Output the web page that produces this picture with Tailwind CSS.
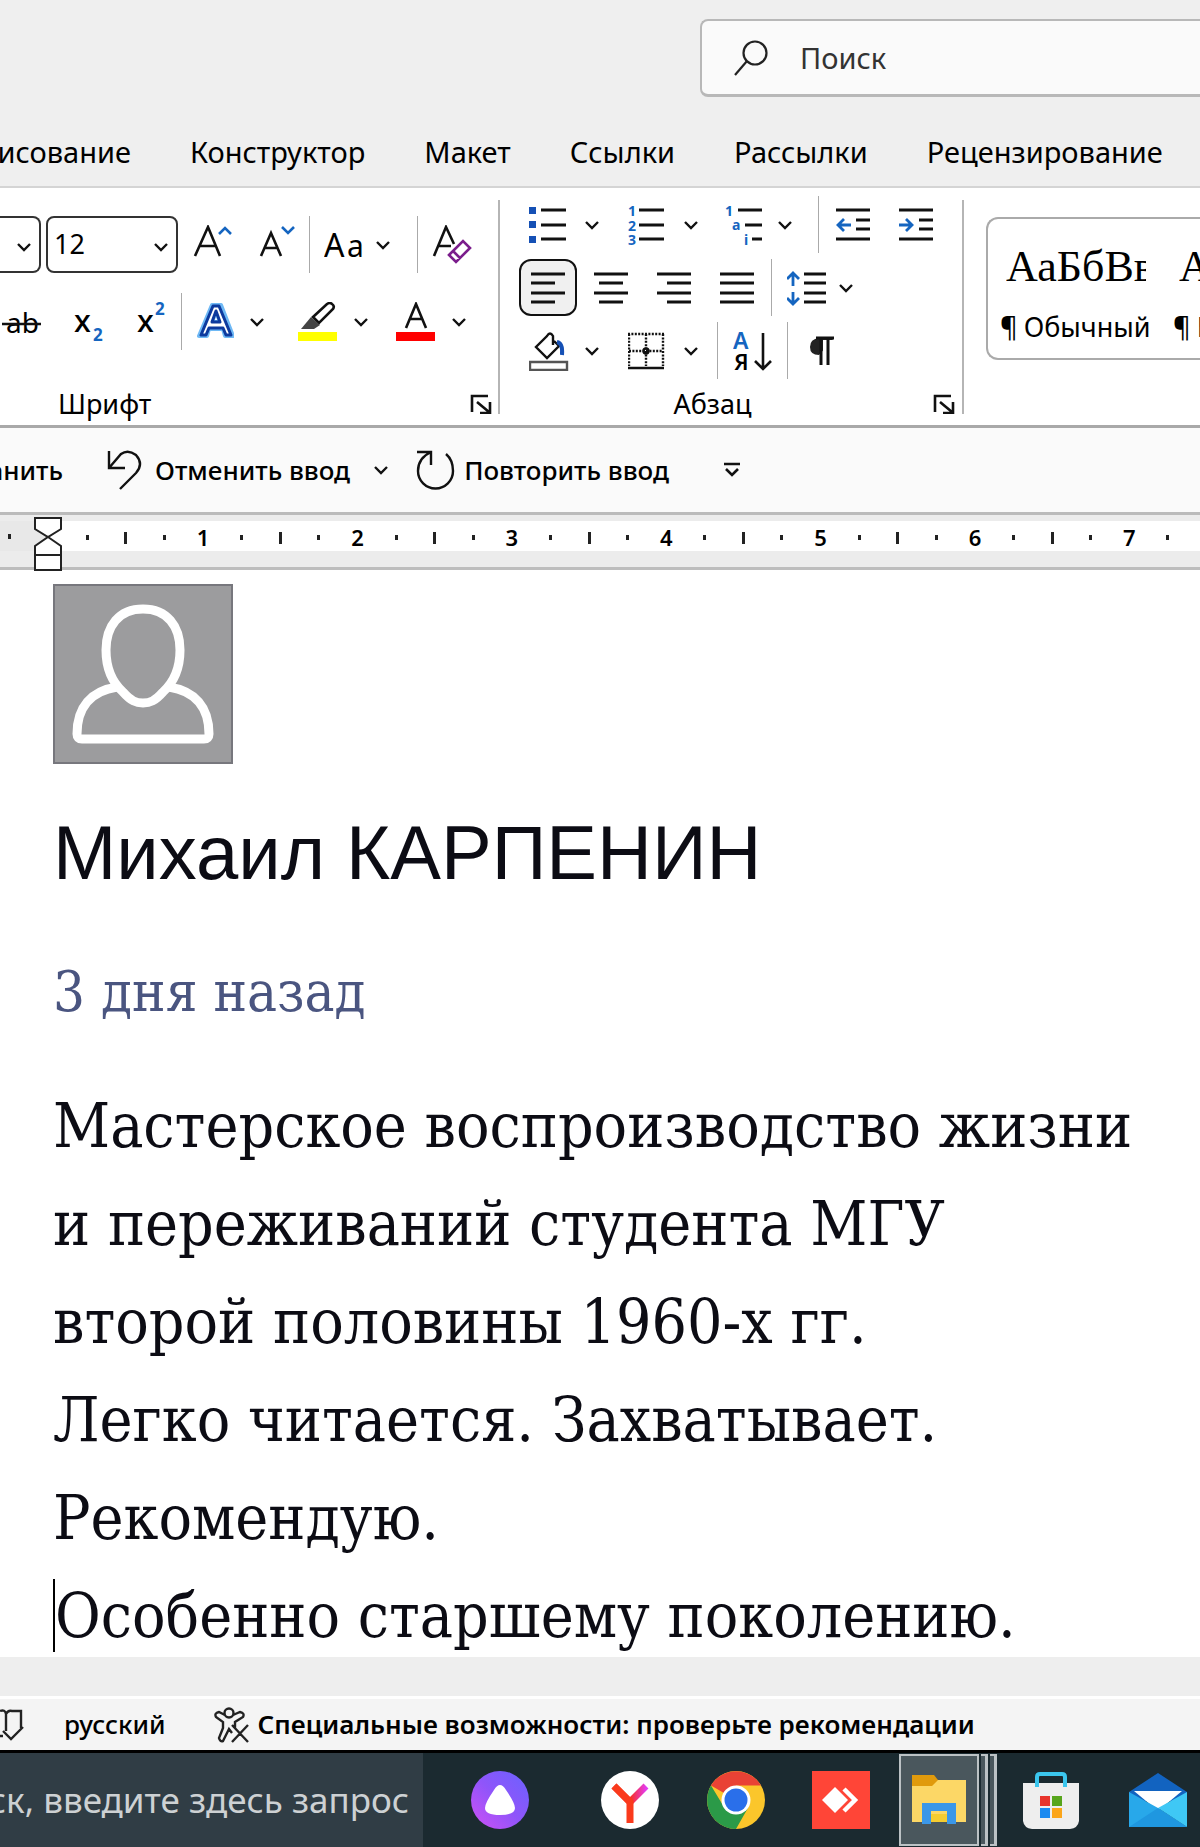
<!DOCTYPE html>
<html lang="ru">
<head>
    <meta charset="UTF-8">
    <meta name="viewport" content="width=device-width, initial-scale=1.0">
    <title>Документ - Word</title>
    <script src="https://cdn.jsdelivr.net/npm/@tailwindcss/browser@4"></script>
</head>
<body class="bg-white text-black font-['Noto_Sans',sans-serif] overflow-x-hidden">
    <!-- Shared shapes -->
    <svg class="hidden">
        <symbol id="chevron" viewBox="0 0 14 10"><path d="M1 2l6 6 6-6" fill="none" stroke="#111" stroke-width="2.4"/></symbol>
        <symbol id="launcher" viewBox="0 0 22 20"><path d="M2 18V2h16M7 8l12 10M20 8v11H10" fill="none" stroke="#111" stroke-width="2.6"/></symbol>
    </svg>

    <!-- Title bar with search and tabs -->
    <header class="bg-[#efefef] border-b-2 border-[#d4d4d4] overflow-hidden">
        <div class="flex justify-end pt-[19px]">
            <label for="search" class="flex items-center w-[500px] h-[78px] pl-8 bg-[#fafafa] rounded-l-lg border-2 border-r-0 border-b-3 border-[#b8b8b8]">
                <svg class="w-[34px] h-9" viewBox="0 0 34 36" fill="none" stroke="#222" stroke-width="2.2"><circle cx="21" cy="13" r="11.5"/><path d="M13 21L1 35"/></svg>
                <input id="search" type="text" placeholder="Поиск" class="ml-8 w-80 text-[29px] outline-none placeholder:text-[#333] placeholder:opacity-100">
            </label>
        </div>
        <nav class="flex h-[89px] items-end gap-[59px] pb-3 text-[29px] leading-[44px] whitespace-nowrap">
            <button class="w-[131px] flex justify-end">Рисование</button>
            <button>Конструктор</button>
            <button>Макет</button>
            <button>Ссылки</button>
            <button>Рассылки</button>
            <button>Рецензирование</button>
        </nav>
    </header>

    <!-- Ribbon -->
    <section class="flex h-[240px] border-b-3 border-[#a9a9a9] overflow-hidden">
        <!-- Font -->
        <div class="flex flex-col w-[500px] shrink-0 pt-7">
            <div class="flex h-[57px]">
                <div class="relative w-[41px] border-2 border-l-0 border-[#333] rounded-r-lg">
                    <select aria-label="Имя шрифта" class="appearance-none size-full outline-none"><option></option></select>
                    <svg class="absolute right-2 top-6 w-[14px] h-[10px] pointer-events-none"><use href="#chevron"/></svg>
                </div>
                <div class="relative w-[132px] ml-[5px] border-2 border-[#333] rounded-lg">
                    <select aria-label="Размер шрифта" class="appearance-none size-full pl-[6px] text-[27px] outline-none"><option>12</option></select>
                    <svg class="absolute right-2 top-6 w-[14px] h-[10px] pointer-events-none"><use href="#chevron"/></svg>
                </div>
                <button aria-label="Увеличить размер" class="w-16 ml-[3px] flex items-center justify-center">
                    <svg class="w-10 h-10" viewBox="0 4 40 40" fill="none" stroke="#111" stroke-width="2.6"><path d="M2 35L15 6l12 29M7 25h16"/><path d="M26 13l6-6 6 6" stroke="#1565c0"/></svg>
                </button>
                <button aria-label="Уменьшить размер" class="w-16 flex items-center justify-center">
                    <svg class="w-10 h-10" viewBox="0 4 40 40" fill="none" stroke="#111" stroke-width="2.6"><path d="M4 35l10-23 10 23M8 27h12"/><path d="M25 6l6 6 6-6" stroke="#1565c0"/></svg>
                </button>
                <div class="w-px bg-[#aaa]"></div>
                <button aria-label="Регистр" class="w-[107px] pl-[14px] flex items-center gap-3">
                    <svg class="w-10 h-10" viewBox="0 3 40 40"><text x="0" y="35" font-size="32">A</text><text x="23" y="35" font-size="30">a</text></svg>
                    <svg class="w-[14px] h-[10px]"><use href="#chevron"/></svg>
                </button>
                <div class="w-px bg-[#aaa]"></div>
                <button aria-label="Очистить формат" class="w-[68px] flex items-center justify-center">
                    <svg class="w-10 h-10" viewBox="0 1 40 40" fill="none" stroke="#111" stroke-width="2.6"><path d="M2 32L14 3l8 17M7 22h12"/><path d="M17 31l14-14 7 7-14 14zM21 27l7 7" stroke="#7b1d8c" fill="#fff"/></svg>
                </button>
            </div>
            <div class="flex h-[57px] mt-[20px]">
                <button aria-label="Зачеркнутый" class="w-[58px]">
                    <svg class="w-[58px] h-10" viewBox="0 0 58 40"><text x="6" y="31" font-size="28">ab</text><path d="M2 22h39" stroke="#111" stroke-width="2.4"/></svg>
                </button>
                <button aria-label="Подстрочный" class="w-[62px]">
                    <svg class="w-[62px] h-12" viewBox="0 0 62 48"><text x="16" y="34" font-size="31" font-weight="500">x</text><text x="35" y="43" font-size="17" font-weight="bold" fill="#1565c0">2</text></svg>
                </button>
                <button aria-label="Надстрочный" class="w-[61px]">
                    <svg class="w-[61px] h-12" viewBox="0 0 61 48"><text x="17" y="34" font-size="31" font-weight="500">x</text><text x="35" y="17" font-size="17" font-weight="bold" fill="#1565c0">2</text></svg>
                </button>
                <div class="w-px bg-[#aaa]"></div>
                <button aria-label="Текстовые эффекты" class="ml-3 flex items-center gap-4">
                    <svg class="w-10 h-10" viewBox="0 1 40 40" stroke-linejoin="round"><path d="M5 35h8l2-7h14l2 7h8L27 4H18zM18 21l4-11 4 11z" fill="#6fb9f5" stroke="#6fb9f5" stroke-width="4" fill-rule="evenodd"/><path d="M7 34h5l3-7h14l3 7h5L25 5h-6zM18 21l4-11 4 11z" fill="#fff" stroke="#0d3a9e" stroke-width="3" fill-rule="evenodd"/></svg>
                    <svg class="w-[14px] h-[10px]"><use href="#chevron"/></svg>
                </button>
                <button aria-label="Цвет выделения" class="ml-[34px] flex items-center gap-4">
                    <svg class="w-10 h-10" viewBox="0 0 40 40"><path d="M0 30h39v9H0z" fill="#ff0"/><path d="M15 15L29 2q3-2 5 0 3 2 1 5L21 21z" fill="#fff" stroke="#111" stroke-width="2.6"/><path d="M13 15l9 8-6 4H3z" fill="#444"/></svg>
                    <svg class="w-[14px] h-[10px]"><use href="#chevron"/></svg>
                </button>
                <button aria-label="Цвет текста" class="ml-7 flex items-center gap-4">
                    <svg class="w-10 h-10" viewBox="0 0 40 40"><path d="M0 30h39v9H0z" fill="red"/><path d="M10 26L20 2l10 24M14 17h12" fill="none" stroke="#111" stroke-width="2.6"/></svg>
                    <svg class="w-[14px] h-[10px]"><use href="#chevron"/></svg>
                </button>
            </div>
            <div class="flex items-center justify-between mt-9 pl-[58px] pr-2 text-[27px] leading-9">
                <span>Шрифт</span>
                <button aria-label="Параметры шрифта"><svg class="w-[22px] h-5"><use href="#launcher"/></svg></button>
            </div>
        </div>
        <div class="w-[2px] h-[214px] mt-3 -ml-[2px] bg-[#b5b5b5] shrink-0"></div>

        <!-- Paragraph -->
        <div class="flex flex-col w-[463px] shrink-0 pt-2">
            <div class="flex h-[57px] pl-[29px]">
                <button aria-label="Маркеры" class="flex items-center gap-4">
                    <svg class="w-10 h-10" viewBox="0 0 40 40"><path d="M0 2h7v7H0zM0 16h7v7H0zM0 31h7v7H0z" fill="#1550b5"/><path d="M12 5h25M12 20h25M12 34h25" stroke="#111" stroke-width="2.8"/></svg>
                    <svg class="w-[14px] h-[10px]"><use href="#chevron"/></svg>
                </button>
                <button aria-label="Нумерация" class="ml-[29px] flex items-center gap-4">
                    <svg class="w-10 h-10" viewBox="0 0 40 40"><g fill="#1565c0" font-size="14" font-weight="bold"><text x="0" y="11">1</text><text x="0" y="26">2</text><text x="0" y="40">3</text></g><path d="M11 5h25M11 20h25M11 34h25" stroke="#111" stroke-width="2.8"/></svg>
                    <svg class="w-[14px] h-[10px]"><use href="#chevron"/></svg>
                </button>
                <button aria-label="Многоуровневый список" class="ml-6 flex items-center gap-4">
                    <svg class="w-10 h-10" viewBox="0 0 40 40"><g fill="#1565c0" font-size="14" font-weight="bold"><text x="3" y="11">1</text><text x="10" y="25">a</text><text x="22" y="40">i</text></g><path d="M16 5h24M23 20h17M30 34h10" stroke="#111" stroke-width="2.8"/></svg>
                    <svg class="w-[14px] h-[10px]"><use href="#chevron"/></svg>
                </button>
                <div class="ml-[26px] w-px bg-[#aaa]"></div>
                <button aria-label="Уменьшить отступ" class="ml-[15px]">
                    <svg class="w-10 h-10" viewBox="0 0 40 40" fill="none" stroke="#111" stroke-width="2.8"><path d="M2 5h34M22 15h14M22 24h14M2 34h34"/><path d="M17 20H4m6-6l-6 6 6 6" stroke="#1565c0"/></svg>
                </button>
                <button aria-label="Увеличить отступ" class="ml-[23px]">
                    <svg class="w-10 h-10" viewBox="0 0 40 40" fill="none" stroke="#111" stroke-width="2.8"><path d="M2 5h34M22 15h14M22 24h14M2 34h34"/><path d="M2 20h13m-6-6l6 6-6 6" stroke="#1565c0"/></svg>
                </button>
            </div>
            <div class="flex h-[57px] mt-[6px] pl-[19px] gap-[5px]">
                <button aria-label="По левому краю" class="w-[58px] flex items-center justify-center bg-[#f0f0f0] border-2 border-[#111] rounded-xl">
                    <svg class="w-[34px] h-8" viewBox="0 0 34 32" stroke="#111" stroke-width="2.8"><path d="M0 2h34M0 11h24M0 21h34M0 30h24"/></svg>
                </button>
                <button aria-label="По центру" class="w-[58px] flex items-center justify-center">
                    <svg class="w-[34px] h-8" viewBox="0 0 34 32" stroke="#111" stroke-width="2.8"><path d="M0 2h34M5 11h24M0 21h34M5 30h24"/></svg>
                </button>
                <button aria-label="По правому краю" class="w-[58px] flex items-center justify-center">
                    <svg class="w-[34px] h-8" viewBox="0 0 34 32" stroke="#111" stroke-width="2.8"><path d="M0 2h34M10 11h24M0 21h34M10 30h24"/></svg>
                </button>
                <button aria-label="По ширине" class="w-[58px] flex items-center justify-center">
                    <svg class="w-[34px] h-8" viewBox="0 0 34 32" stroke="#111" stroke-width="2.8"><path d="M0 2h34M0 11h34M0 21h34M0 30h34"/></svg>
                </button>
                <div class="w-px bg-[#aaa]"></div>
                <button aria-label="Интервал" class="ml-[10px] flex items-center gap-3">
                    <svg class="w-10 h-10" viewBox="0 0 40 40" fill="none" stroke="#111" stroke-width="2.8"><path d="M17 6h22M17 15h22M17 25h22M17 34h22"/><path d="M6 18V5M0 11l6-6 6 6M6 24v12M0 30l6 6 6-6" stroke="#1565c0"/></svg>
                    <svg class="w-[14px] h-[10px]"><use href="#chevron"/></svg>
                </button>
            </div>
            <div class="flex h-[57px] mt-[6px] pl-[29px]">
                <button aria-label="Заливка" class="flex items-center gap-4">
                    <svg class="w-10 h-10" viewBox="0 0 40 40" fill="none" stroke="#111" stroke-width="2.4"><path d="M1 31h37v8H1z" stroke="#555"/><path d="M24 14V5q-3-5-6 0L7 16l11 11 12-12-5-5"/><path d="M28 11q6 1 5 13" stroke="#1550b5" stroke-width="4"/></svg>
                    <svg class="w-[14px] h-[10px]"><use href="#chevron"/></svg>
                </button>
                <button aria-label="Границы" class="ml-[29px] flex items-center gap-4">
                    <svg class="w-10 h-10" viewBox="0 0 40 40" fill="none" stroke="#111" stroke-width="2.4"><path d="M0 3h36M1 3v32M35 3v32M18 3v32M1 20h34" stroke-dasharray="2 1.4"/><circle cx="18" cy="20" r="2.5"/><path d="M0 37h36"/></svg>
                    <svg class="w-[14px] h-[10px]"><use href="#chevron"/></svg>
                </button>
                <div class="ml-[19px] w-px bg-[#aaa]"></div>
                <button aria-label="Сортировка" class="ml-[15px]">
                    <svg class="w-10 h-10" viewBox="0 0 40 40"><text x="0" y="18" font-size="23" font-weight="600" fill="#1565c0">А</text><text x="1" y="39" font-size="22" font-weight="600">Я</text><path d="M30 2v36M22 30l8 8 8-8" fill="none" stroke="#111" stroke-width="2.6"/></svg>
                </button>
                <div class="ml-[14px] w-px bg-[#aaa]"></div>
                <button aria-label="Непечатаемые знаки" class="ml-[14px]">
                    <svg class="w-10 h-10" viewBox="0 0 40 40"><path d="M32 7H17q-9 1-9 9t9 8z" fill="#222"/><path d="M21 9h4v25h-4zM27 9h6v25h-6z" fill="#fff"/><path d="M14 7h18M19 7v27M26 7v27" fill="none" stroke="#111" stroke-width="3"/></svg>
                </button>
            </div>
            <div class="flex items-center mt-[7px] pr-2 text-[27px] leading-9">
                <span class="flex-1 pr-2 text-center">Абзац</span>
                <button aria-label="Параметры абзаца"><svg class="w-[22px] h-5"><use href="#launcher"/></svg></button>
            </div>
        </div>
        <div class="w-[2px] h-[214px] mt-3 -ml-[1px] bg-[#b5b5b5] shrink-0"></div>

        <!-- Styles -->
        <div class="flex flex-1 h-[143px] mt-[29px] ml-[22px] pl-3 border-2 border-r-0 border-[#aaa] rounded-l-xl overflow-hidden">
            <button class="w-[173px] shrink-0 pt-4 text-left">
                <span class="block w-[140px] ml-[6px] overflow-hidden font-['Liberation_Serif',serif] text-[44px] leading-[60px]">АаБбВв</span>
                <span class="flex gap-[6px] text-[27px] leading-[60px] whitespace-nowrap"><span>¶</span><span>Обычный</span></span>
            </button>
            <button class="w-[173px] shrink-0 pt-4 text-left">
                <span class="block w-[140px] ml-[6px] overflow-hidden font-['Liberation_Serif',serif] text-[44px] leading-[60px]">АаБбВв</span>
                <span class="flex gap-[6px] text-[27px] leading-[60px] whitespace-nowrap"><span>¶</span><span>Без инт</span></span>
            </button>
        </div>
    </section>

    <!-- Quick access bar -->
    <div class="flex items-center h-[87px] bg-[#fafafa] border-b-3 border-[#bbb] text-[26px] font-medium whitespace-nowrap overflow-hidden">
        <button class="w-[63px] flex justify-end">Сохранить</button>
        <button class="ml-11 flex items-center gap-3">
            <svg class="w-9 h-10" viewBox="0 0 36 40" fill="none" stroke="#111" stroke-width="2.4"><path d="M2 1v17h16M2 18L14 4q7-5 15 1 8 9 0 18L13 39"/></svg>
            Отменить ввод
        </button>
        <button aria-label="Список отмены" class="ml-6"><svg class="w-[14px] h-[10px]"><use href="#chevron"/></svg></button>
        <button class="ml-7 flex items-center gap-2">
            <svg class="w-10 h-10" viewBox="0 0 40 40" fill="none" stroke="#111" stroke-width="2.4"><path d="M1 2h14v13M15 2Q2 8 2 21a17.500 17.500 0 0 0 35 0Q37 10 30 4"/></svg>
            Повторить ввод
        </button>
        <button aria-label="Настройка панели" class="ml-[55px]"><svg class="w-4 h-4" viewBox="0 0 16 16" fill="none" stroke="#111" stroke-width="2.6"><path d="M0 2h16M2 7l6 6 6-6"/></svg></button>
    </div>

    <!-- Ruler -->
    <div class="relative h-[55px] pt-[6px] bg-[#ececec] border-b-3 border-[#bdbdbd]">
        <div class="flex h-[30px] bg-white overflow-hidden">
            <div class="w-12 shrink-0 pl-2 flex items-center bg-[#e8e8e8]"><i class="w-[3px] h-[5px] bg-[#222]"></i></div>
            <div id="marks" class="ml-5 w-[1235px] shrink-0 grid grid-cols-32 items-center justify-items-center text-[22px] font-semibold"></div>
        </div>
        <svg class="absolute left-[34px] top-[2px] w-7 h-[54px]" viewBox="0 0 28 54" fill="#fff" stroke="#222" stroke-width="2"><path d="M1 1h26v11L14 20 1 12zM14 20l13 9v9H1v-9zM1 38h26v15H1z"/></svg>
    </div>

    <!-- Document -->
    <main class="h-[1087px] pl-[53px] pt-[14px] bg-white text-[#0c0c14] overflow-hidden">
        <svg class="size-[180px] bg-[#9c9c9e] border-2 border-[#77777d]" viewBox="0 0 176 176" fill="none" stroke="#fff" stroke-width="9" stroke-linejoin="round"><path d="M88 23C64 23 51 40 51 64c0 17 6 32 17 42 8 9 13 11 20 11s12-2 20-11c11-10 17-25 17-42 0-24-13-41-37-41z"/><path d="M62 101c-26 4-40 20-40 47q0 5 5 5h122q5 0 5-5c0-27-14-43-40-47"/></svg>
        <h1 class="mt-[44px] font-['Liberation_Sans',sans-serif] text-[76px] leading-[90px]">Михаил КАРПЕНИН</h1>
        <div class="font-['DejaVu_Serif_Condensed','Liberation_Serif',serif]">
            <p class="mt-[44px] text-[56px] leading-[100px] text-[#4a5580]">3 дня назад</p>
            <p class="mt-[35px] text-[62px] leading-[98px] whitespace-nowrap">
                Мастерское воспроизводство жизни<br>
                и переживаний студента МГУ<br>
                второй половины 1960-х гг.<br>
                Легко читается. Захватывает.<br>
                Рекомендую.<br>
                <span class="border-l-2 border-black">Особенно старшему поколению.</span>
            </p>
        </div>
    </main>
    <div class="h-[42px] bg-[#eeeeee] border-b-3 border-white"></div>

    <!-- Status bar -->
    <footer>
        <div class="flex items-center h-[51px] bg-[#f4f4f4] text-[26px] font-medium whitespace-nowrap overflow-hidden">
            <button aria-label="Правописание"><svg class="w-6 h-8" viewBox="0 0 24 32" fill="none" stroke="#222" stroke-width="2.4"><path d="M0 2q5-2 6 3v17M6 5q2-4 6-3h9v17M0 27h3M3 22l8 8 12-12"/></svg></button>
            <button class="ml-10">русский</button>
            <button class="ml-12 flex items-center gap-2 font-semibold">
                <svg class="w-9 h-9" viewBox="0 0 36 36" fill="none" stroke="#222" stroke-width="2.4"><circle cx="15" cy="6" r="4.500"/><path d="M11 8L5 5Q0 6 2 10l7 5v6L5 31q1 4 4 3l6-12 3 4M19 8l7-3q5 1 3 5l-8 5v6M18 18l16 17M34 18L18 35"/></svg>
                Специальные возможности: проверьте рекомендации
            </button>
        </div>

        <!-- Taskbar -->
        <div class="flex items-stretch h-[97px] bg-[#1b2a30] border-t-3 border-black overflow-hidden">
            <div class="w-[423px] shrink-0 flex justify-end items-center pr-[14px] bg-[#303d45]">
                <input type="text" aria-label="Поиск" value="Поиск, введите здесь запрос" class="w-[700px] -ml-72 text-right text-[35px] text-[#cdd1d3] outline-none">
            </div>
            <div class="flex items-center">
                <button aria-label="Алиса" class="ml-12">
                    <svg class="size-[58px]" viewBox="0 0 58 58"><defs><linearGradient id="al" x1="0" y1="1" x2="1" y2="0"><stop offset="0" stop-color="#d050f5"/><stop offset=".5" stop-color="#8f55fa"/><stop offset="1" stop-color="#6a62ff"/></linearGradient></defs><circle cx="29" cy="29" r="29" fill="url(#al)"/><path d="M29 14q3 0 6 5 9 13 9 18 0 7-15 7t-15-7q0-5 9-18 3-5 6-5z" fill="#fff"/></svg>
                </button>
                <button aria-label="Яндекс Браузер" class="ml-[72px]">
                    <svg class="size-[58px]" viewBox="0 0 58 58"><defs><linearGradient id="yb"><stop offset=".5" stop-color="#f8301c"/><stop offset="1" stop-color="#e43bf0"/></linearGradient></defs><circle cx="29" cy="29" r="29" fill="#fff"/><path d="M13 15l16 16 16-16" fill="none" stroke="url(#yb)" stroke-width="7"/><path d="M13 15l16 16v21" fill="none" stroke="#fa3a1c" stroke-width="7"/></svg>
                </button>
                <button aria-label="Google Chrome" class="ml-12">
                    <svg class="size-[58px]" viewBox="0 0 58 58"><circle cx="29" cy="29" r="29" fill="#fbc62b"/><path d="M29 29L4 14.500A29 29 0 0 1 54 14.500H29z" fill="#e94235"/><path d="M4 14.500A29 29 0 0 0 29 58L41.500 36 29 43 17 36z" fill="#2b9a48"/><circle cx="29" cy="29" r="14.500" fill="#fff"/><circle cx="29" cy="29" r="11.500" fill="#2a6fea"/></svg>
                </button>
                <button aria-label="AnyDesk" class="ml-[47px]">
                    <svg class="size-[58px]" viewBox="0 0 58 58"><path d="M0 0h58v58H0z" fill="#ff4537"/><path d="M10 29l13-13 13 13-13 13z" fill="#fff"/><path d="M32 18l11 11-11 11" fill="none" stroke="#fff" stroke-width="4.500"/></svg>
                </button>
                <button aria-label="Проводник" class="ml-[29px] flex gap-[2px] h-[92px]">
                    <span class="w-20 flex items-center justify-center bg-[#4a575d] border-2 border-[#bcc2c5]">
                        <svg class="w-14 h-[52px]" viewBox="0 0 56 52"><path d="M1 1h22l4 5v8H1z" fill="#e09a0c"/><path d="M1 12h20l6-6h28v42H1z" fill="#fcd766"/><path d="M11 50V29h34v21h-9V37H20v13z" fill="#3b97e8"/><path d="M20 40h16v8H20z" fill="#f5cc30"/></svg>
                    </span>
                    <span class="w-[7px] bg-[#4a575d] border-r-3 border-t-2 border-b-2 border-[#bcc2c5]"></span>
                    <span class="w-[7px] bg-[#4a575d] border-r-3 border-t-2 border-b-2 border-[#bcc2c5]"></span>
                </button>
                <button aria-label="Microsoft Store" class="ml-[26px]">
                    <svg class="w-14 h-[58px]" viewBox="0 0 56 58"><path d="M0 12h56v38q-1 7-9 8H9q-8-1-9-8z" fill="#eee"/><path d="M14 16V6q0-3 3-3h22q3 0 3 3v10" fill="none" stroke="#3bc6ee" stroke-width="4"/><path d="M17 25h10v10H17z" fill="#e8352c"/><path d="M29 25h10v10H29z" fill="#57a51c"/><path d="M17 37h10v10H17z" fill="#1b8af0"/><path d="M29 37h10v10H29z" fill="#fba51a"/></svg>
                </button>
                <button aria-label="Почта" class="ml-[50px]">
                    <svg class="w-[58px] h-[54px]" viewBox="0 0 58 54"><path d="M0 19L29 0l29 19v9H0z" fill="#1263c0"/><path d="M5 18h48L29 38z" fill="#fff"/><path d="M0 19v35h58L29 35z" fill="#28a8ea"/><path d="M58 19v35L29 35z" fill="#3fc8f5"/><path d="M0 54h58L29 35z" fill="#1f97e0"/></svg>
                </button>
            </div>
        </div>
    </footer>

    <script>
        // Ruler marks: dot, half tick, dot, number
        const marks = document.getElementById("marks");
        for (let i = 1; i <= 32; i++) {
            if (i % 4 === 0) marks.innerHTML += `<b class="font-semibold">${i / 4}</b>`;
            else if (i % 2 === 0) marks.innerHTML += '<i class="w-[3px] h-3 bg-[#222]"></i>';
            else marks.innerHTML += '<i class="w-[3px] h-[5px] bg-[#222]"></i>';
        }
    </script>
</body>
</html>
